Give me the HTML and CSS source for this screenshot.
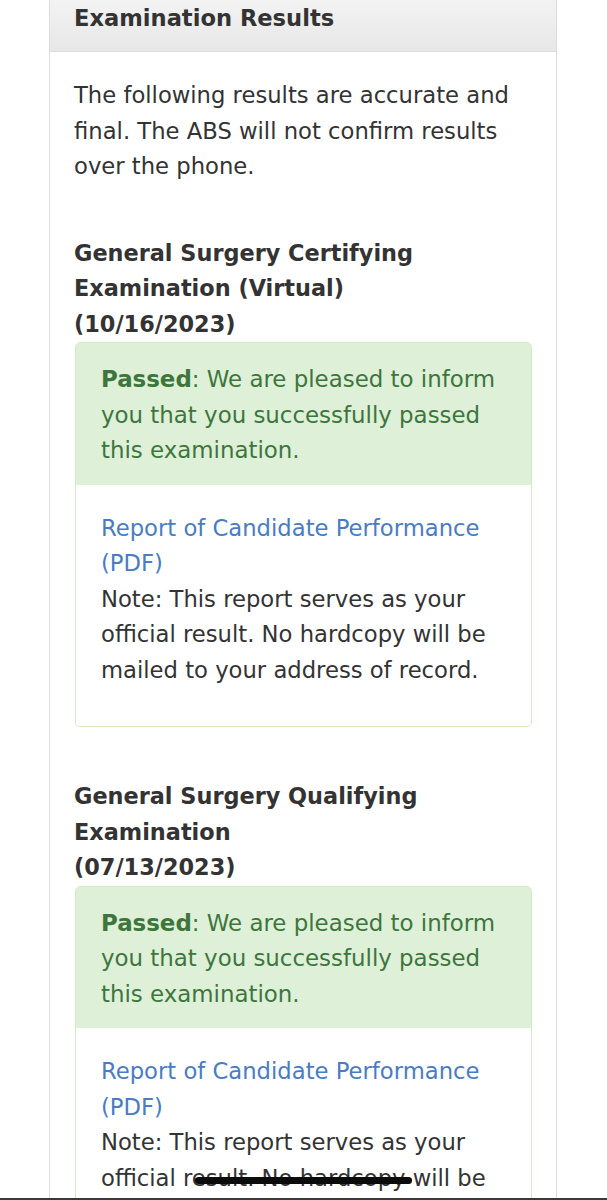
FILE: index.html
```html
<!DOCTYPE html>
<html lang="en">
<head>
<meta charset="utf-8">
<title>Examination Results</title>
<link rel="stylesheet" href="styles.css">
</head>
<body>
<div class="page">
  <section class="panel">
    <header class="panel-heading">Examination Results</header>
    <div class="panel-body">
      <p class="intro">The following results are accurate and final. The ABS will not confirm results over the phone.</p>

      <h3 class="exam-title">General Surgery Certifying Examination (Virtual)<br>(10/16/2023)</h3>
      <div class="result">
        <div class="result-status"><strong>Passed</strong>: We are pleased to inform you that you successfully passed this examination.</div>
        <div class="result-body">
          <a class="report-link" href="#">Report of Candidate Performance (PDF)</a>
          <p class="note">Note: This report serves as your official result. No hardcopy will be mailed to your address of record.</p>
        </div>
      </div>

      <h3 class="exam-title">General Surgery Qualifying Examination<br>(07/13/2023)</h3>
      <div class="result">
        <div class="result-status"><strong>Passed</strong>: We are pleased to inform you that you successfully passed this examination.</div>
        <div class="result-body">
          <a class="report-link" href="#">Report of Candidate Performance (PDF)</a>
          <p class="note">Note: This report serves as your official result. No hardcopy will be mailed to your address of record.</p>
        </div>
      </div>
    </div>
  </section>
</div>
<div class="home-indicator"></div>
<div class="bottom-edge"></div>
</body>
</html>
```

FILE: styles.css
```css
html, body {
  margin: 0;
  padding: 0;
  background: #ffffff;
}
body {
  font-family: "DejaVu Sans", Verdana, sans-serif;
  font-size: 22.7px;
  line-height: 35.5px;
  color: #333333;
  height: 1200px;
  overflow: hidden;
}
.page {
  padding: 0 50px 0 49px;
}
.panel {
  border: 1px solid #dddddd;
  border-top: none;
  background: #ffffff;
}
.panel-heading {
  background: linear-gradient(#f3f3f3, #e7e7e7);
  border-bottom: 1px solid #dcdcdc;
  padding: 0 24px 15px;
  font-size: 22.6px;
  line-height: 36px;
  font-weight: bold;
  color: #333333;
}
.panel-body {
  padding: 26px 24px 0;
}
.intro {
  margin: 0 0 51px;
}
.exam-title {
  margin: 0;
  font-size: 22.4px;
  line-height: 35.5px;
  font-weight: bold;
  color: #333333;
}
.result {
  border: 1px solid #d6e9c6;
  border-radius: 5px;
  margin: 0 0 52px 1px;
  overflow: hidden;
}
.result-status {
  background: #dff0d8;
  color: #3c763d;
  font-size: 22.9px;
  padding: 19px 25px 16px;
}
.result-body {
  padding: 26px 25px 38px;
  background: #ffffff;
}
.report-link {
  color: #4a7cc4;
  text-decoration: none;
  display: block;
}
.note {
  margin: 0;
}
.home-indicator {
  position: fixed;
  left: 195px;
  top: 1177px;
  width: 217px;
  height: 7px;
  border-radius: 4px;
  background: #0b0b0b;
}
.bottom-edge {
  position: fixed;
  left: 0;
  right: 0;
  top: 1198px;
  height: 2px;
  background: #3a3a3a;
}
```
